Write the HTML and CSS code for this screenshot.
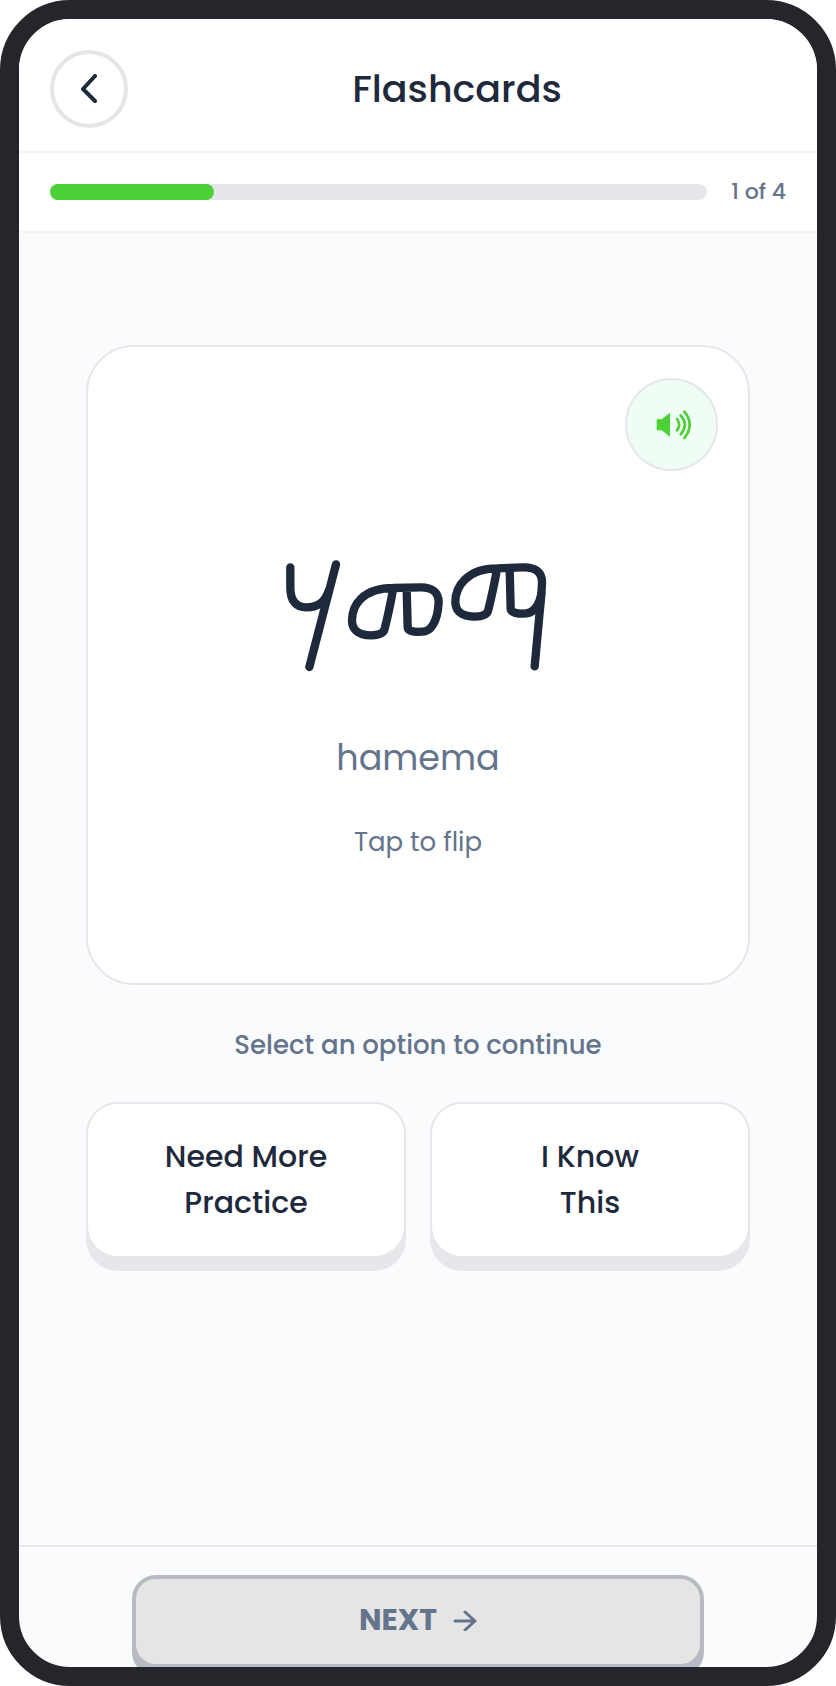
FILE: index.html
```html
<!DOCTYPE html>
<html lang="en">
<head>
  <meta charset="UTF-8">
  <meta name="viewport" content="width=device-width, initial-scale=1">
  <title>Flashcards</title>
  <link rel="stylesheet" href="styles.css">
</head>
<body>
  <div class="phone">
    <header class="header">
      <button class="back" aria-label="Back">
        <svg width="18" height="30" viewBox="0 0 18 30" fill="none" stroke="currentColor" stroke-width="4" stroke-linecap="round" stroke-linejoin="round">
          <path d="M15 2L3 15l12 12"/>
        </svg>
      </button>
      <h1 class="title">Flashcards</h1>
    </header>

    <div class="progress">
      <div class="bar"><div class="bar-fill" style="width: 25%"></div></div>
      <span class="count">1 of 4</span>
    </div>

    <main class="content">
      <section class="card">
        <button class="audio" aria-label="Play sound">
          <svg width="36" height="30" viewBox="0 0 108 90" fill="none" stroke="currentColor" stroke-width="8" stroke-linecap="round">
            <path d="M2 28h15L42 8v72L17 61H2z" fill="currentColor" stroke="none"/>
            <path d="M63 27q13 17 0 34"/>
            <path d="M74 16q25 28 0 57"/>
            <path d="M85 5q32 39 0 79"/>
          </svg>
        </button>

        <svg class="word" viewBox="63 80 822 351" role="img" aria-label="hamema">
          <path d="M91 111V172C91 211 108 231 139 231C175 231 194 216 206 182"/>
          <path d="M228 102L148 410"/>
          <path d="M400 173Q388 240 374 295Q371 314 334 315C291 315 276 294 276 271C276 225 308 173 400 173L480 171C518 170 536 187 536 216C533 275 512 304 487 304Q443 307 443 291L440 175"/>
          <path d="M711 117Q699 183 685 238Q682 258 645 259C602 259 586 239 586 215C586 170 621 114 711 114L790 111C827 110 846 127 846 155Q845 190 839 245L824 408"/>
          <path d="M844 190C836 232 818 250 790 250Q753 250 752 235L749 118"/>
        </svg>
        <p class="latin">hamema</p>
        <p class="hint">Tap to flip</p>
      </section>

      <p class="prompt">Select an option to continue</p>

      <div class="options">
        <button class="option">Need More<br>Practice</button>
        <button class="option">I Know<br>This</button>
      </div>
    </main>

    <footer class="footer">
      <button class="next" disabled>
        NEXT
        <svg width="24" height="22" viewBox="0 0 24 22" fill="none" stroke="currentColor" stroke-width="3" stroke-linecap="round" stroke-linejoin="round">
          <path d="M2 12h20M12 3l10 9-10 9"/>
        </svg>
      </button>
    </footer>
  </div>
</body>
</html>
```

FILE: styles.css
```css
* {
  box-sizing: border-box;
}

body {
  margin: 0;
  background-color: #fff;
  font-family: Poppins, Inter, sans-serif;
  color: #1e293b;
}

h1, p {
  margin: 0;
}

button {
  padding: 0;
  font-family: inherit;
  color: inherit;
  cursor: pointer;
}

.phone {
  display: flex;
  flex-direction: column;
  height: 100vh;
  overflow: hidden;
  border: 19px solid #25262c;
  border-radius: 70px;
  background-color: #fafbfd;
}

/* top bar */
.header {
  display: flex;
  align-items: center;
  padding: 31px 31px 23px;
  background-color: #fff;
  border-bottom: 2px solid #f3f4f6;
}

.back {
  display: flex;
  align-items: center;
  justify-content: center;
  width: 78px;
  height: 78px;
  border: 4px solid #e5e5e5;
  border-radius: 50%;
  background-color: #fff;
}

.title {
  flex: 1;
  text-align: center;
  font-size: 38px;
  line-height: 48px;
  font-weight: 500;
}

.progress {
  display: flex;
  align-items: center;
  gap: 24px;
  padding: 20px 31px;
  background-color: #fff;
  border-bottom: 2px solid #f3f4f6;
}

.bar {
  flex: 1;
  height: 16px;
  border-radius: 8px;
  background-color: #e5e7eb;
}

.bar-fill {
  height: 100%;
  border-radius: 8px;
  background-color: #4cd137;
}

.count {
  font-size: 22px;
  line-height: 38px;
  font-weight: 500;
  color: #64748b;
}

/* flashcard */
.content {
  flex: 1;
  min-height: 0;
  padding: 112px 67px 0;
  text-align: center;
}

.card {
  position: relative;
  display: flex;
  flex-direction: column;
  align-items: center;
  min-height: 640px;
  padding-top: 210px;
  border: 2px solid #e5e7eb;
  border-radius: 48px;
  background-color: #fff;
}

.audio {
  position: absolute;
  top: 31px;
  right: 30px;
  display: flex;
  align-items: center;
  justify-content: center;
  width: 93px;
  height: 93px;
  padding-left: 4px;
  border: 2px solid #e5e7eb;
  border-radius: 50%;
  background-color: #f0fdf4;
  color: #4cd137;
}

.word {
  width: 274px;
  height: 117px;
  fill: none;
  stroke: #1e293b;
  stroke-width: 25;
  stroke-linecap: round;
  stroke-linejoin: round;
}

.latin {
  margin-top: 56px;
  font-size: 35px;
  line-height: 56px;
  color: #64748b;
}

.hint {
  margin-top: 36px;
  font-size: 26px;
  line-height: 40px;
  color: #64748b;
}

.prompt {
  margin-top: 40px;
  font-size: 26px;
  line-height: 40px;
  font-weight: 500;
  color: #64748b;
}

.options {
  display: flex;
  gap: 24px;
  margin-top: 37px;
}

.option {
  flex: 1;
  padding: 30px 0;
  border: 2px solid #e5e7eb;
  border-radius: 32px;
  background-color: #fff;
  box-shadow: 0 13px 0 #e5e7eb;
  font-size: 30px;
  line-height: 46px;
  font-weight: 500;
}

/* bottom bar */
.footer {
  height: 122px;
  padding: 28px 113px 0;
  border-top: 2px solid #e5e7eb;
}

.next {
  display: flex;
  align-items: center;
  justify-content: center;
  gap: 16px;
  width: 100%;
  height: 93px;
  padding-bottom: 4px;
  border: 4px solid #b8bac2;
  border-radius: 24px;
  background-color: #e5e5e5;
  box-shadow: 0 8px 0 #b8bac2;
  font-size: 30px;
  font-weight: 700;
  color: #64748b;
}
```
